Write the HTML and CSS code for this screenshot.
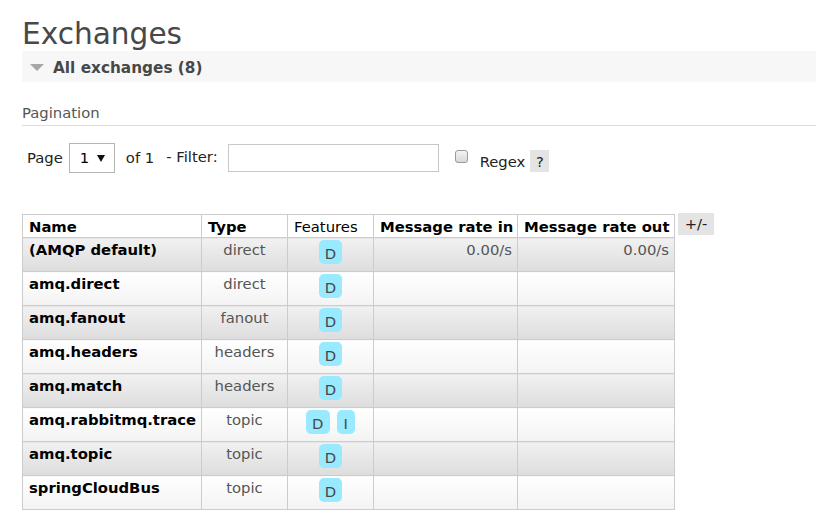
FILE: index.html
```html
<!DOCTYPE html>
<html>
<head>
<meta charset="utf-8">
<link rel="stylesheet" href="styles.css">
</head>
<body>
<div class="page">
  <h1 class="title">Exchanges</h1>
  <div class="section-bar">
    <svg class="tri" width="14" height="7" viewBox="0 0 14 7"><polygon points="0,0 14,0 7,7" fill="#a6a6a6"/></svg>
    <span class="section-title">All exchanges (8)</span>
  </div>
  <h3 class="pag-title">Pagination</h3>
  <div class="pag-row">
    <span class="lbl lbl-page">Page</span>
    <span class="select"><span class="sel-val">1</span><svg class="sel-arrow" width="8" height="7" viewBox="0 0 8 7"><polygon points="0,0 8,0 4,7" fill="#111"/></svg></span>
    <span class="lbl lbl-of">of 1</span>
    <span class="lbl lbl-filter">- Filter:</span>
    <span class="input"></span>
    <span class="check"></span>
    <span class="regex">Regex</span>
    <span class="help">?</span>
  </div>
  <div class="table-wrap">
    <table class="list">
      <colgroup>
        <col class="c-name"><col class="c-type"><col class="c-feat"><col class="c-in"><col class="c-out">
      </colgroup>
      <thead>
        <tr>
          <th>Name</th>
          <th>Type</th>
          <th class="plain">Features</th>
          <th>Message rate in</th>
          <th>Message rate out</th>
        </tr>
      </thead>
      <tbody>
        <tr class="alt1">
          <td class="name">(AMQP default)</td><td class="type">direct</td>
          <td class="feat"><span class="badge">D</span></td>
          <td class="rate">0.00/s</td><td class="rate">0.00/s</td>
        </tr>
        <tr class="alt2">
          <td class="name">amq.direct</td><td class="type">direct</td>
          <td class="feat"><span class="badge">D</span></td>
          <td class="rate"></td><td class="rate"></td>
        </tr>
        <tr class="alt1">
          <td class="name">amq.fanout</td><td class="type">fanout</td>
          <td class="feat"><span class="badge">D</span></td>
          <td class="rate"></td><td class="rate"></td>
        </tr>
        <tr class="alt2">
          <td class="name">amq.headers</td><td class="type">headers</td>
          <td class="feat"><span class="badge">D</span></td>
          <td class="rate"></td><td class="rate"></td>
        </tr>
        <tr class="alt1">
          <td class="name">amq.match</td><td class="type">headers</td>
          <td class="feat"><span class="badge">D</span></td>
          <td class="rate"></td><td class="rate"></td>
        </tr>
        <tr class="alt2">
          <td class="name">amq.rabbitmq.trace</td><td class="type">topic</td>
          <td class="feat"><span class="badge">D</span><span class="badge badge-i">I</span></td>
          <td class="rate"></td><td class="rate"></td>
        </tr>
        <tr class="alt1">
          <td class="name">amq.topic</td><td class="type">topic</td>
          <td class="feat"><span class="badge">D</span></td>
          <td class="rate"></td><td class="rate"></td>
        </tr>
        <tr class="alt2">
          <td class="name">springCloudBus</td><td class="type">topic</td>
          <td class="feat"><span class="badge">D</span></td>
          <td class="rate"></td><td class="rate"></td>
        </tr>
      </tbody>
    </table>
    <span class="toggle">+/-</span>
  </div>
</div>
</body>
</html>
```
FILE: styles.css
```css
html, body {
  margin: 0;
  padding: 0;
  background: #fff;
}
body {
  font-family: "DejaVu Sans", Verdana, sans-serif;
  font-size: 14.8px;
  line-height: 18px;
  color: #484848;
  overflow: hidden;
}
.page {
  padding-left: 22px;
}
.title {
  margin: 18px 0 0 0;
  font-size: 29.6px;
  line-height: 33px;
  font-weight: normal;
  color: #484848;
}
.section-bar {
  display: flex;
  align-items: center;
  height: 31px;
  background: #f7f7f7;
}
.tri {
  margin-left: 8px;
  margin-top: 1px;
}
.section-title {
  margin-left: 9px;
  font-weight: bold;
  font-size: 15.3px;
  color: #484848;
  padding-top: 2px;
}
.pag-title {
  margin: 22px 0 0 0;
  font-size: 14.8px;
  line-height: 18px;
  font-weight: normal;
  color: #555;
  padding-bottom: 3px;
  border-bottom: 1px solid #ddd;
}
.pag-row {
  display: flex;
  align-items: flex-start;
  padding-top: 17px;
  padding-left: 5px;
  color: #222;
}
.lbl {
  margin-top: 6px;
  white-space: nowrap;
}
.select {
  display: flex;
  align-items: center;
  box-sizing: border-box;
  width: 46px;
  height: 30px;
  margin-left: 6px;
  border: 1px solid #b5b5b5;
  background: #fff;
  color: #000;
}
.sel-val {
  margin-left: 10px;
}
.sel-arrow {
  margin-left: 8px;
}
.lbl-of {
  margin-left: 11px;
}
.lbl-filter {
  margin-left: 12px;
  margin-top: 5px;
}
.input {
  box-sizing: border-box;
  width: 211px;
  height: 28px;
  margin-top: 1px;
  margin-left: 10px;
  border: 1px solid #c8c8c8;
  background: #fff;
}
.check {
  box-sizing: border-box;
  width: 13px;
  height: 13px;
  margin-top: 7px;
  margin-left: 16px;
  border: 1px solid #9a9a9a;
  border-radius: 3px;
  background: linear-gradient(#f4f4f4, #d8d8d8);
}
.regex {
  margin-left: 12px;
  margin-top: 10px;
}
.help {
  margin-left: 5px;
  margin-top: 7px;
  width: 19px;
  height: 22px;
  box-sizing: border-box;
  padding-top: 3px;
  text-align: center;
  background: #e4e4e4;
  color: #222;
}
.table-wrap {
  display: flex;
  align-items: flex-start;
  margin-top: 41px;
}
.list {
  border-collapse: collapse;
  table-layout: fixed;
  width: 652px;
}
.c-name { width: 179px; }
.c-type { width: 86px; }
.c-feat { width: 86px; }
.c-in { width: 144px; }
.c-out { width: 157px; }
.list th, .list td {
  border: 1px solid #ccc;
  white-space: nowrap;
  vertical-align: top;
  overflow: hidden;
}
.list th {
  padding: 3px 4px 1px 6px;
  text-align: left;
  font-weight: bold;
  color: #000;
  background: #fff;
}
.list th.plain {
  font-weight: normal;
}
.list td {
  padding: 3px 6px 12px 6px;
}
.alt1 td {
  background: linear-gradient(#f1f1f1, #dddddd);
}
.alt2 td {
  background: linear-gradient(#ffffff, #f3f3f3);
}
.list td.name {
  font-weight: bold;
  color: #000;
}
.list td.type {
  text-align: center;
  color: #555;
}
.list td.rate {
  text-align: right;
  color: #555;
  padding-right: 5px;
}
.list td.feat {
  text-align: center;
  padding: 2px 4px 7px 4px;
}
.badge {
  display: inline-block;
  height: 24px;
  box-sizing: border-box;
  padding: 5px 6px 1px 6px;
  line-height: 18px;
  border-radius: 5px;
  background: #99e9ff;
  color: #484848;
}
.badge-i {
  margin-left: 7px;
  padding: 5px 7px 1px 7px;
}
.toggle {
  margin-left: 3px;
  margin-top: -1px;
  width: 36px;
  height: 22px;
  box-sizing: border-box;
  padding-top: 2px;
  text-align: center;
  background: #e4e4e4;
  color: #222;
}
```
